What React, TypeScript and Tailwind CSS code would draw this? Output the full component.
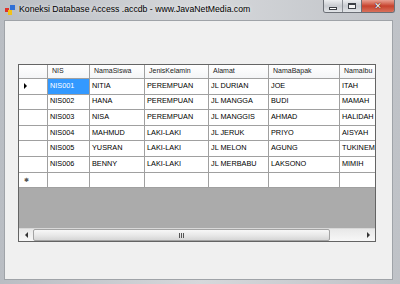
import React from "react";

const cols = [
  { name: "NIS", w: "w-[42px]", key: "nis" },
  { name: "NamaSiswa", w: "w-[55px]", key: "nama" },
  { name: "JenisKelamin", w: "w-[64px]", key: "jk" },
  { name: "Alamat", w: "w-[60px]", key: "alamat" },
  { name: "NamaBapak", w: "w-[71px]", key: "bapak" },
  { name: "NamaIbu", w: "w-[60px]", key: "ibu" },
] as const;

const rows = [
  { nis: "NIS001", nama: "NITIA", jk: "PEREMPUAN", alamat: "JL DURIAN", bapak: "JOE", ibu: "ITAH" },
  { nis: "NIS002", nama: "HANA", jk: "PEREMPUAN", alamat: "JL MANGGA", bapak: "BUDI", ibu: "MAMAH" },
  { nis: "NIS003", nama: "NISA", jk: "PEREMPUAN", alamat: "JL MANGGIS", bapak: "AHMAD", ibu: "HALIDAH" },
  { nis: "NIS004", nama: "MAHMUD", jk: "LAKI-LAKI", alamat: "JL JERUK", bapak: "PRIYO", ibu: "AISYAH" },
  { nis: "NIS005", nama: "YUSRAN", jk: "LAKI-LAKI", alamat: "JL MELON", bapak: "AGUNG", ibu: "TUKINEM" },
  { nis: "NIS006", nama: "BENNY", jk: "LAKI-LAKI", alamat: "JL MERBABU", bapak: "LAKSONO", ibu: "MIMIH" },
];

function AppIcon() {
  return (
    <svg width="10" height="10" viewBox="0 0 10 10">
      <rect x="0" y="3" width="4" height="4" fill="#e0332a" />
      <rect x="3" y="5" width="4" height="5" fill="#f2c218" />
      <rect x="5" y="0" width="5" height="5" fill="#2f6fd6" />
    </svg>
  );
}

function CaptionButtons() {
  return (
    <div className="ml-auto mr-[5px] self-start flex h-[13px] border border-t-0 border-[#6b6f76] rounded-b-[3px] overflow-hidden">
      <div className="w-[19px] h-full flex items-center justify-center bg-gradient-to-b from-[#eceef0] via-[#c9ccd1] to-[#e2e5e8] border-r border-[#8a8e94]">
        <div className="w-[8px] h-[3px] mt-[4px] bg-white border border-[#3c4046]" />
      </div>
      <div className="w-[19px] h-full flex items-center justify-center bg-gradient-to-b from-[#eceef0] via-[#c9ccd1] to-[#e2e5e8] border-r border-[#6b6f76]">
        <div className="w-[8px] h-[6px] border border-[#3c4046] bg-[#f4f4f4] shadow-[inset_0_1px_0_#3c4046]" />
      </div>
      <div className="w-[32px] h-full flex items-center justify-center bg-gradient-to-b from-[#e8a193] via-[#c7412c] to-[#d8705a]">
        <span className="text-white text-[9px] leading-none font-bold font-['DejaVu_Sans',sans-serif] [text-shadow:0_0_1px_#3a1410,0_0_1px_#3a1410]">
          ✕
        </span>
      </div>
    </div>
  );
}

function HScroll() {
  return (
    <div className="h-[13px] flex border-t border-[#d8d8d8] bg-gradient-to-b from-[#e8e8e8] to-[#f7f7f7]">
      <div className="w-[14px] flex items-center justify-center">
        <div className="w-0 h-0 border-y-[3px] border-y-transparent border-r-[3px] border-r-[#333]" />
      </div>
      <div className="w-[297px] h-full border border-[#a3a3a3] rounded-[2px] bg-gradient-to-b from-[#f7f7f7] via-[#e9e9e9] to-[#d6d6d6] flex items-center justify-center gap-[1px]">
        <div className="w-[1px] h-[5px] bg-[#555]" />
        <div className="w-[1px] h-[5px] bg-[#555]" />
        <div className="w-[1px] h-[5px] bg-[#555]" />
      </div>
      <div className="flex-1" />
      <div className="w-[13px] flex items-center justify-center">
        <div className="w-0 h-0 border-y-[3px] border-y-transparent border-l-[3px] border-l-[#333]" />
      </div>
    </div>
  );
}

function DataGrid() {
  return (
    <div className="ml-[13px] mt-[43px] w-[358px] h-[178px] border border-[#646464] bg-[#ababab] flex flex-col overflow-hidden text-[7.3px] text-black">
      <div className="flex h-[14px] bg-gradient-to-b from-white to-[#f3f4f6] shrink-0">
        <div className="w-[29px] shrink-0 border-r border-b border-[#a0a0a0]" />
        {cols.map((c) => (
          <div
            key={c.key}
            className={`${c.w} shrink-0 border-r border-b border-[#a0a0a0] pl-[4px] flex items-center whitespace-nowrap overflow-hidden text-[7px] text-[#222]`}
          >
            {c.name}
          </div>
        ))}
      </div>
      {[...rows, null].map((r, i) => (
        <div key={i} className="flex h-[15.6px] shrink-0 bg-white">
          <div className="w-[29px] shrink-0 border-r border-b border-[#a0a0a0] flex items-center pl-[5px]">
            {i === 0 && (
              <div className="w-0 h-0 border-y-[3px] border-y-transparent border-l-[3px] border-l-black" />
            )}
            {r === null && <span className="text-[6px] leading-none text-[#555]">✱</span>}
          </div>
          {cols.map((c, j) => (
            <div
              key={c.key}
              className={`${c.w} shrink-0 border-r border-b border-[#a0a0a0] pl-[2px] flex items-center whitespace-nowrap overflow-hidden ${
                i === 0 && j === 0 ? "bg-[#3399ff] text-white" : ""
              }`}
            >
              {r ? r[c.key] : ""}
            </div>
          ))}
        </div>
      ))}
      <div className="flex-1" />
      <HScroll />
    </div>
  );
}

export default function App() {
  return (
    <div className="w-[400px] h-[284px] flex flex-col bg-gradient-to-r from-[#b9bdc3] via-[#d6d8db] to-[#bfc2c7] font-['Liberation_Sans',sans-serif] overflow-hidden">
      <div className="h-[20px] shrink-0 flex items-center pl-[5px]">
        <AppIcon />
        <span className="ml-[4px] text-[8.7px] text-black [text-shadow:0_0_4px_rgba(255,255,255,0.9)]">
          Koneksi Database Access .accdb - www.JavaNetMedia.com
        </span>
        <CaptionButtons />
      </div>
      <div className="flex-1 ml-[4px] mr-[7px] mb-[4px] bg-[#f0f0f0] border border-[#9fa3a8]">
        <DataGrid />
      </div>
    </div>
  );
}
